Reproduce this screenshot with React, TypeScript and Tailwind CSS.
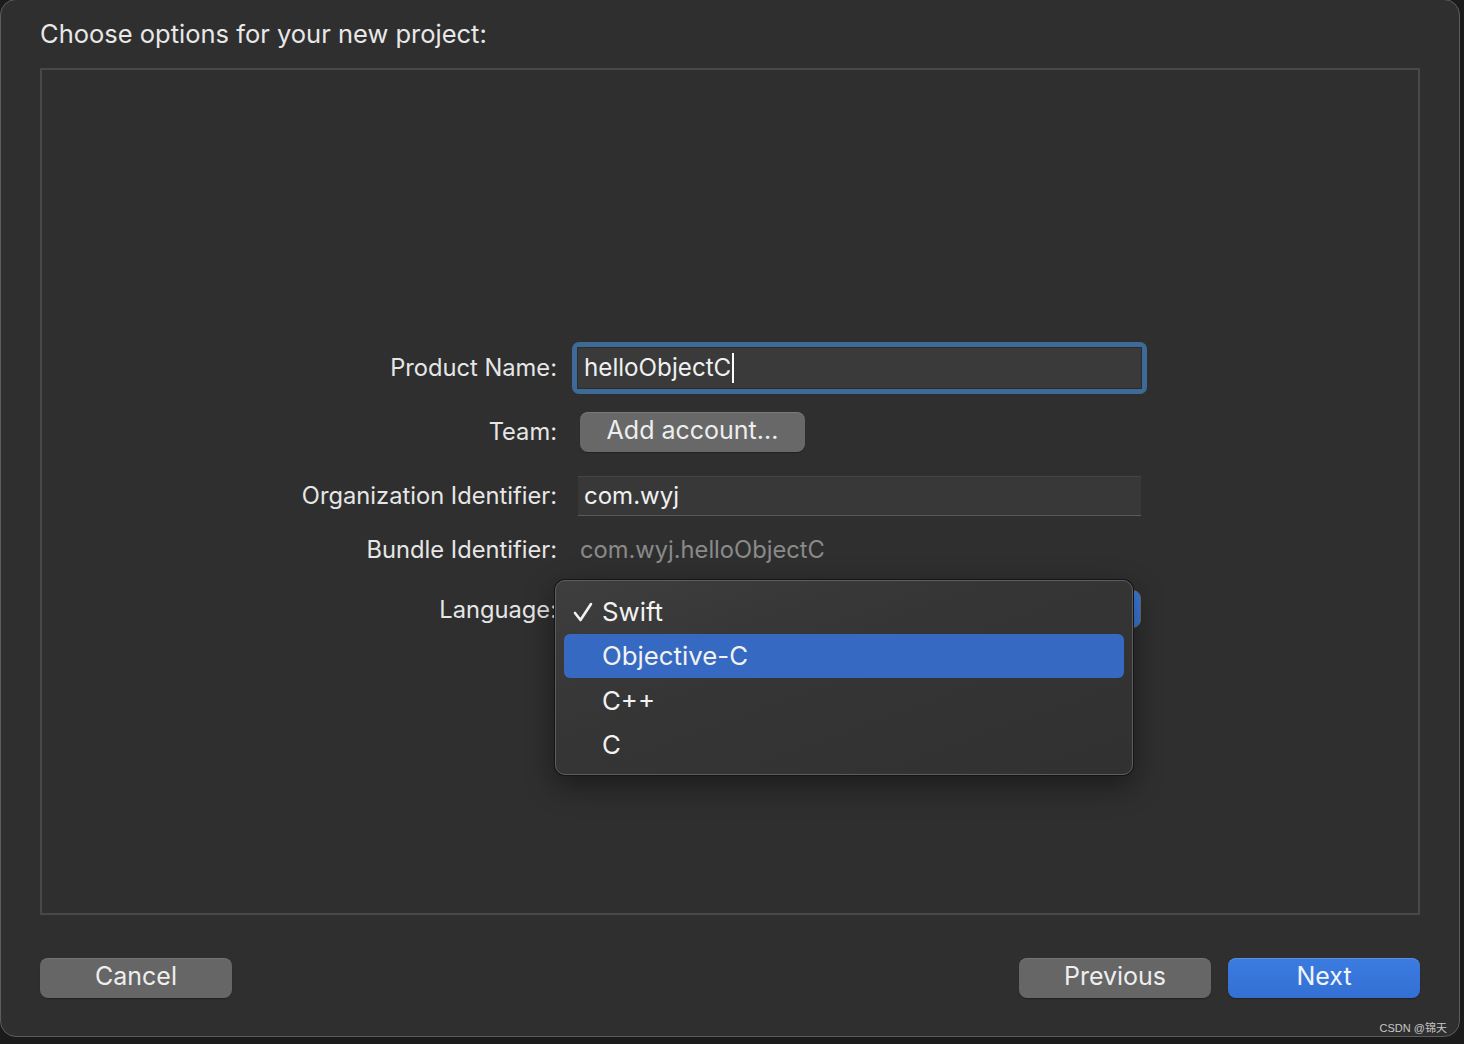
import React from "react";

const font = { fontFamily: "Inter, 'Noto Sans', 'Noto Sans CJK SC', sans-serif" };

function Label({ children }: { children: React.ReactNode }) {
  return (
    <div className="w-[515px] shrink-0 text-right text-[23.7px] text-[#e6e6e6]">{children}</div>
  );
}

export default function App() {
  return (
    <div className="w-[1464px] h-[1044px] bg-[#1b1b1b] relative overflow-hidden" style={font}>
      <div className="w-[1460px] h-[1038px] rounded-[16px] border border-[#5c5c5c] bg-[#2f2f2f] -mt-px flex flex-col pl-[39px] pr-[39px]">
        <div className="h-[68px] flex items-center text-[25.5px] text-[#e8e8e8] pt-[1px]">
          Choose options for your new project:
        </div>
        <div className="h-[847px] border-2 border-[#484848] flex flex-col">
          {/* Product Name */}
          <div className="mt-[272px] h-[52px] flex items-center">
            <Label>Product Name:</Label>
            <div className="ml-[15px] w-[575px] h-[52px] rounded-[7px] bg-[#3e6a98] p-[5px]">
              <div className="h-full w-full bg-[#3a3a3a] border border-[#2c2c2c] flex items-center pl-[6px] text-[24.2px] text-[#f0f0f0]">
                helloObjectC<span className="inline-block w-[2px] h-[30px] bg-white ml-[1px]" />
              </div>
            </div>
          </div>
          {/* Team */}
          <div className="mt-[18px] h-[40px] flex items-center">
            <Label>Team:</Label>
            <div className="ml-[23px] w-[225px] h-[40px] rounded-[8px] bg-[#686868] shadow-[inset_0_1px_0_rgba(255,255,255,0.12),0_1px_1px_rgba(0,0,0,0.3)] flex items-center justify-center text-[25px] text-[#eeeeee] pb-[3px]">
              Add account...
            </div>
          </div>
          {/* Org */}
          <div className="mt-[24px] h-[40px] flex items-center">
            <Label>Organization Identifier:</Label>
            <div className="ml-[21px] w-[563px] h-[40px] bg-[#383838] border-t border-[#444] border-b border-b-[#5a5a5a] flex items-center pl-[6px] text-[24px] text-[#f0f0f0]">
              com.wyj
            </div>
          </div>
          {/* Bundle */}
          <div className="mt-[14px] h-[40px] flex items-center">
            <Label>Bundle Identifier:</Label>
            <div className="ml-[23px] text-[23.7px] text-[#8a8a8a]">com.wyj.helloObjectC</div>
          </div>
          {/* Language */}
          <div className="mt-[20px] h-[40px] flex items-center">
            <Label>Language:</Label>
            <div className="ml-[15px] relative w-[575px] h-[40px]">
              <div className="absolute left-[6px] top-[0px] w-[563px] h-[38px] rounded-[8px] bg-[#3a79d9] border border-[#6a6a6a]" />
              <div className="absolute left-[-17px] top-[-10px] w-[578px] h-[195px] rounded-[10px] border border-[#5e5e5e] shadow-[0_0_0_1px_#141414,0_10px_30px_rgba(0,0,0,0.45)] bg-[linear-gradient(160deg,#3e3e3e_0%,#353535_40%,#313131_100%)] pt-[9px] px-[8px] text-[25.8px] text-[#f2f2f2]">
                <div className="h-[44px] flex items-center relative">
                  <span className="absolute left-[8px] top-[10px]">
                    <svg width="22" height="24" viewBox="0 0 22 24">
                      <path d="M3 13 L8.5 20 L19 4" fill="none" stroke="#f2f2f2" strokeWidth="2.6" strokeLinecap="round" strokeLinejoin="round" />
                    </svg>
                  </span>
                  <span className="pl-[38px] pt-[1px]">Swift</span>
                </div>
                <div className="h-[44px] flex items-center rounded-[6px] bg-[#366ac2]">
                  <span className="pl-[38px] pt-[1px]">Objective-C</span>
                </div>
                <div className="h-[44px] flex items-center">
                  <span className="pl-[38px] pt-[2px]">C++</span>
                </div>
                <div className="h-[44px] flex items-center">
                  <span className="pl-[38px] pt-[2px]">C</span>
                </div>
              </div>
            </div>
          </div>
        </div>
        <div className="mt-[43px] flex items-center justify-between">
          <div className="w-[192px] h-[40px] rounded-[8px] bg-[#666666] shadow-[inset_0_1px_0_rgba(255,255,255,0.1),0_1px_1px_rgba(0,0,0,0.3)] flex items-center justify-center text-[25px] text-[#eeeeee] pb-[2px]">
            Cancel
          </div>
          <div className="flex gap-[17px]">
            <div className="w-[192px] h-[40px] rounded-[8px] bg-[#666666] shadow-[inset_0_1px_0_rgba(255,255,255,0.1),0_1px_1px_rgba(0,0,0,0.3)] flex items-center justify-center text-[25px] text-[#eeeeee] pb-[2px]">
              Previous
            </div>
            <div className="w-[192px] h-[40px] rounded-[8px] bg-[linear-gradient(180deg,#3b7be0_0%,#3470d4_100%)] shadow-[inset_0_1px_0_rgba(255,255,255,0.15),0_1px_1px_rgba(0,0,0,0.3)] flex items-center justify-center text-[25px] text-[#f0f4fb] pb-[2px]">
              Next
            </div>
          </div>
        </div>
      </div>
      <div className="absolute right-[17px] bottom-[8px] text-[11px] text-[#c8c8c8]" style={{ fontFamily: "'Liberation Sans', 'Noto Sans CJK SC', sans-serif" }}>
        CSDN @锦天
      </div>
    </div>
  );
}
